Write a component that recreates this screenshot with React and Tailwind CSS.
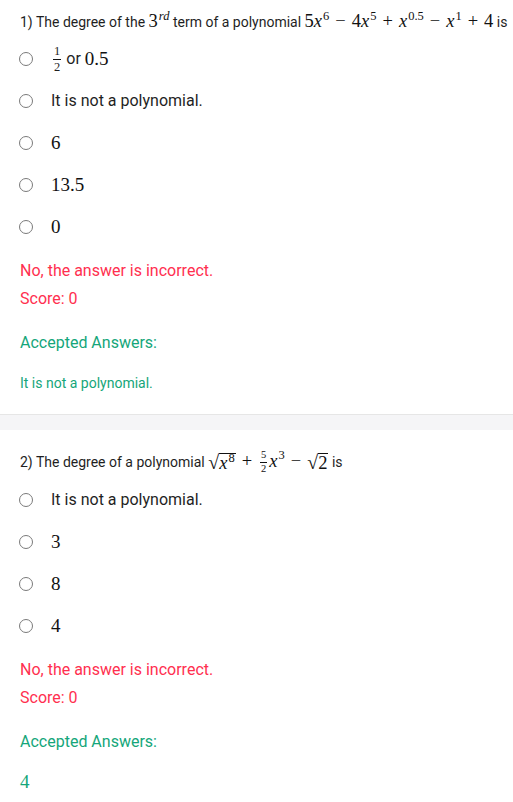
const sans = { fontFamily: 'Roboto, "Liberation Sans", sans-serif' }
const serif = { fontFamily: '"Liberation Serif", "DejaVu Serif", serif' }

function M({ children, className = 'text-[18.5px]' }) {
  return <span className={`text-[#111] ${className}`} style={serif}>{children}</span>
}

function X() {
  return <i className="italic">x</i>
}

function Op({ children }) {
  return <span className="mx-[6px]">{children}</span>
}

function Sup({ children }) {
  return <sup className="text-[12.5px] relative -top-[7px] align-baseline ml-[1px]">{children}</sup>
}

function Frac({ n, d, size = 'text-[12.5px]' }) {
  return (
    <span className={`inline-flex flex-col items-center align-middle leading-none mx-[2px] ${size}`} style={serif}>
      <span className="px-[1px] pb-[1px]">{n}</span>
      <span className="border-t border-[#111] px-[1px] pt-[1px]">{d}</span>
    </span>
  )
}

function Sqrt({ children }) {
  return (
    <span className="inline-flex items-end">
      <span className="text-[20px] leading-[22px]">√</span>
      <span className="border-t border-[#111] mt-[2px] leading-[19px] pr-[1px]">{children}</span>
    </span>
  )
}

function Radio() {
  return <span className="w-[14px] h-[14px] rounded-full border-[1.5px] border-[#7a7a7a] shrink-0 ml-[19px] mr-[18px]" />
}

function Option({ children }) {
  return (
    <div className="h-[42px] flex items-center -ml-5">
      <Radio />
      <div className="text-[16px] text-[#1f1f1f] flex items-center" style={sans}>{children}</div>
    </div>
  )
}

function Feedback({ answer }) {
  return (
    <>
      <div className="mt-[9px] h-[28px] flex items-center text-[16px] text-[#ff2f4f]" style={sans}>No, the answer is incorrect.</div>
      <div className="h-[28px] flex items-center text-[16px] text-[#ff2f4f]" style={sans}>Score: 0</div>
      <div className="mt-4 h-[28px] flex items-center text-[16px] text-[#15a67a]" style={sans}>Accepted Answers:</div>
      <div className="mt-3 h-[28px] flex items-center text-[#15a67a]">{answer}</div>
    </>
  )
}

export default function App() {
  return (
    <div className="w-[513px] h-[802px] bg-white overflow-hidden" style={sans}>
      <div className="px-5 pt-3">
        <div className="h-[20px] flex items-center whitespace-nowrap text-[14px] text-[#1f1f1f]">
          1) The degree of the&nbsp;
          <M>3<Sup><i>rd</i></Sup></M>
          &nbsp;term of a polynomial&nbsp;
          <M>
            5<X /><Sup>6</Sup><Op>−</Op>4<X /><Sup>5</Sup><Op>+</Op><X /><Sup>0.5</Sup><Op>−</Op><X /><Sup>1</Sup><Op>+</Op>4
          </M>
          &nbsp;is
        </div>
        <div className="mt-[6px]">
          <Option>
            <Frac n="1" d="2" />
            <span className="ml-[3px]">or&nbsp;</span>
            <M className="text-[19px]">0.5</M>
          </Option>
          <Option>It is not a polynomial.</Option>
          <Option><M className="text-[19px]">6</M></Option>
          <Option><M className="text-[19px]">13.5</M></Option>
          <Option><M className="text-[19px]">0</M></Option>
        </div>
        <Feedback answer={<span className="text-[14px]" style={sans}>It is not a polynomial.</span>} />
      </div>

      <div className="mt-[17px] border-t border-[#e6e6e6] h-[16px] bg-[#f5f5f7]" />

      <div className="px-5 pt-[22px]">
        <div className="h-[20px] flex items-center whitespace-nowrap text-[14px] text-[#1f1f1f]">
          2) The degree of a polynomial&nbsp;
          <M className="text-[18.5px] inline-flex items-center">
            <Sqrt><X /><Sup>8</Sup></Sqrt>
            <Op>+</Op>
            <Frac n="5" d="2" size="text-[10.5px]" />
            <X /><Sup>3</Sup>
            <Op>−</Op>
            <Sqrt>2</Sqrt>
          </M>
          &nbsp;is
        </div>
        <div className="mt-[7px]">
          <Option>It is not a polynomial.</Option>
          <Option><M className="text-[19px]">3</M></Option>
          <Option><M className="text-[19px]">8</M></Option>
          <Option><M className="text-[19px]">4</M></Option>
        </div>
        <Feedback answer={<span className="text-[19px]" style={serif}>4</span>} />
      </div>
    </div>
  )
}
